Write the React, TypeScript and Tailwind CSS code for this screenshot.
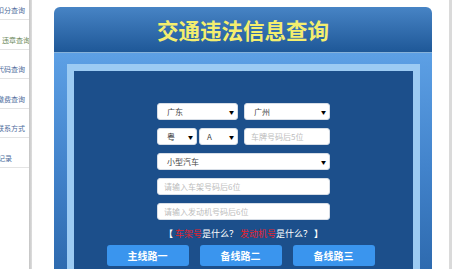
const menu = [
  { text: "扣分查询", shift: "ml-[-3px]", color: "text-[#4d6b9b]" },
  { text: "违章查询", shift: "ml-[2px]", color: "text-[#6d8a5d]" },
  { text: "代码查询", shift: "ml-[-3px]", color: "text-[#4d6b9b]" },
  { text: "缴费查询", shift: "ml-[-3px]", color: "text-[#4d6b9b]" },
  { text: "联系方式", shift: "ml-[-3px]", color: "text-[#4d6b9b]" },
  { text: "查询记录", shift: "ml-[-16px]", color: "text-[#4d6b9b]" },
];

const FakeSelect = ({ label, className }: { label: string; className: string }) => (
  <div
    className={`h-[17px] bg-white rounded-[3px] border border-[#d6dde6] flex items-center justify-between pl-[9px] pr-[3px] text-[8px] text-[#444] ${className}`}
  >
    <span>{label}</span>
    <span className="text-[5px] text-black">▼</span>
  </div>
);

const TextBox = ({ placeholder, className }: { placeholder: string; className: string }) => (
  <input
    readOnly
    placeholder={placeholder}
    className={`h-[17px] bg-white rounded-[3px] border border-[#d6dde6] px-[6px] text-[8px] text-[#444] placeholder:text-[#bcbcbc] outline-none ${className}`}
  />
);

export default function App() {
  return (
    <div
      className="flex h-[269px] w-[455px] overflow-hidden bg-white"
      style={{ fontFamily: '"Noto Sans CJK SC", "Noto Sans", sans-serif' }}
    >
      {/* sidebar, scrolled a bit */}
      <div className="w-[29px] shrink-0 overflow-hidden">
        <div className="-mt-[9.5px]">
          {menu.map((m) => (
            <div
              key={m.text}
              className="h-[29.5px] border-b border-[#e4e4e4] pt-[14.5px] whitespace-nowrap overflow-hidden"
            >
              <div className={`text-[7px] leading-[10px] ${m.shift} ${m.color}`}>{m.text}</div>
            </div>
          ))}
        </div>
      </div>
      <div className="w-[3px] shrink-0 bg-linear-to-r from-[#c4c4c4] to-[#dedede]" />

      <div className="w-[22px] shrink-0" />

      {/* main panel */}
      <div className="w-[378px] shrink-0 mt-[7px] rounded-t-[6px] overflow-hidden">
        <div className="h-[45px] bg-linear-to-b from-[#4784c5] to-[#1e5898] flex items-center justify-center">
          <h1 className="text-[21.5px] font-bold text-[#f4ee6e] leading-none">
            交通违法信息查询
          </h1>
        </div>
        <div className="h-px bg-[#86b2da]" />
        <div className="h-[230px] bg-linear-to-b from-[#5da0e5] via-[#4283cb] to-[#2b67ab] pt-[11px] pl-[13px] pr-[12px]">
          <div className="h-[240px] border-[7px] border-[#9ccbf3] bg-[#1c4f8b] pt-[32px] pb-[10px]">
            <div className="w-[173px] mx-auto flex flex-col gap-[8px]">
              <div className="flex gap-[6px]">
                <FakeSelect label="广东" className="w-[81px]" />
                <FakeSelect label="广州" className="w-[86px]" />
              </div>
              <div className="flex gap-[6px]">
                <div className="flex gap-[2px] w-[81px]">
                  <FakeSelect label="粤" className="w-[40px]" />
                  <FakeSelect label="A" className="w-[39px] !pl-[7px]" />
                </div>
                <TextBox placeholder="车牌号码后5位" className="w-[86px]" />
              </div>
              <FakeSelect label="小型汽车" className="w-full" />
              <TextBox placeholder="请输入车架号码后6位" className="w-full" />
              <TextBox placeholder="请输入发动机号码后6位" className="w-full" />
            </div>

            <p className="mt-[8px] h-[12px] text-center text-[9px] leading-[12px] text-white">
              <span className="font-bold">【</span>
              <span className="text-[#e3232f]"> 车架号</span>是什么？
              <span className="text-[#e3232f]"> 发动机号</span>是什么？
              <span className="font-bold"> 】</span>
            </p>

            <div className="mt-[5px] flex justify-center gap-[11px] pr-[6px]">
              {["主线路一", "备线路二", "备线路三"].map((b) => (
                <button
                  key={b}
                  className="w-[82px] h-[21px] rounded-[3px] bg-[#3a95ee] text-white text-[10px] font-bold leading-none"
                >
                  {b}
                </button>
              ))}
            </div>
          </div>
        </div>
      </div>

      <div className="w-[17px] shrink-0" />
      <div className="w-[3px] shrink-0 bg-[#dadada]" />
      <div className="flex-1" />
    </div>
  );
}
